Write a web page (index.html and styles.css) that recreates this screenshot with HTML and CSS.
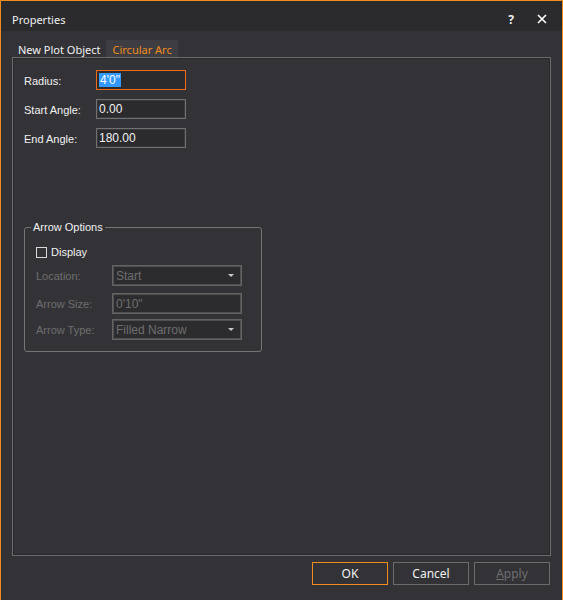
FILE: index.html
```
<!DOCTYPE html>
<html>
<head>
<meta charset="utf-8">
<link rel="stylesheet" href="styles.css">
</head>
<body>
<div class="window">
  <div class="titlebar">
    <span class="title">Properties</span>
    <span class="help">?</span>
    <span class="close"><svg width="10" height="10" viewBox="0 0 10 10"><path d="M1 1 L9 9 M9 1 L1 9" stroke="#ffffff" stroke-width="1.6"/></svg></span>
  </div>
  <div class="tabs">
    <div class="tab">New Plot Object</div>
    <div class="tab active">Circular Arc</div>
  </div>
  <div class="panel">
    <div class="fields">
      <div class="row"><label>Radius:</label><div class="input focused"><span class="sel">4'0"</span></div></div>
      <div class="row"><label>Start Angle:</label><div class="input">0.00</div></div>
      <div class="row"><label>End Angle:</label><div class="input">180.00</div></div>
    </div>
    <fieldset class="group">
      <legend>Arrow Options</legend>
      <div class="check"><span class="box"></span><span>Display</span></div>
      <div class="grow"><label>Location:</label><div class="combo">Start<span class="arrow"></span></div></div>
      <div class="grow"><label>Arrow Size:</label><div class="combo">0'10"</div></div>
      <div class="grow last"><label>Arrow Type:</label><div class="combo">Filled Narrow<span class="arrow"></span></div></div>
    </fieldset>
  </div>
  <div class="buttons">
    <div class="btn default">OK</div>
    <div class="btn">Cancel</div>
    <div class="btn disabled"><u>A</u>pply</div>
  </div>
</div>
</body>
</html>
```
FILE: styles.css
```
html, body { margin: 0; padding: 0; background: #333337; }
.window {
  width: 563px; height: 600px; box-sizing: border-box;
  border: 1px solid #f08c1e; border-bottom: none;
  background: #333337;
  display: flex; flex-direction: column;
  font-family: "Liberation Sans", Arial, sans-serif; font-size: 11px; color: #f1f1f1;
}
.titlebar {
  height: 30px; box-sizing: border-box; background: #2b2b2d; display: flex; align-items: center;
  padding: 6px 0 0 11px; flex-shrink: 0;
}
.title { font-family: "Noto Sans", "Open Sans", sans-serif; font-size: 11px; color: #f1f1f1; flex: 1; }
.help { font-family: "Noto Sans", sans-serif; font-weight: bold; font-size: 12px; color: #f1f1f1; margin-right: 23px; }
.close { width: 10px; height: 10px; margin-right: 15px; display: flex; }
.tabs { display: flex; margin-top: 9px; padding-left: 11px; height: 17px; }
.tab {
  font-family: "Noto Sans", "Open Sans", sans-serif; font-size: 11px;
  height: 17px; line-height: 19px; padding: 0 6px; color: #f1f1f1;
}
.tab.active { background: #3e3e42; color: #f08c1e; }
.panel {
  margin: 0 11px; height: 499px; box-sizing: border-box;
  border: 1px solid #6b6b6b; box-shadow: inset 1px 1px 0 #2a2a2c, inset -1px -1px 0 #2a2a2c;
  padding: 12px 11px 0 11px; flex-shrink: 0;
}
.fields { display: flex; flex-direction: column; gap: 9px; }
.row { display: flex; align-items: center; height: 20px; }
.row label { width: 72px; padding-top: 1px; }
.input {
  width: 90px; height: 20px; box-sizing: border-box; border: 1px solid #707070;
  outline: 1px solid #3a3a3e; outline-offset: -2px;
  background: #2b2b2e; padding: 2px 0 0 2px; line-height: 15px; color: #f1f1f1; font-size: 12px;
}
.input.focused { border-color: #f06b16; outline: none; }
.sel { background: #3399ff; color: #ffffff; padding: 0 1px; }
.group {
  margin: 72px 0 0 0; width: 238px; height: 132px; box-sizing: border-box;
  border: 1px solid #747474; border-radius: 3px; padding: 10px 0 0 11px;
}
.group legend { padding: 0 2px; margin-left: -5px; color: #f1f1f1; line-height: 14px; }
.check { display: flex; align-items: center; gap: 4px; height: 12px; margin-top: 2px; }
.box { width: 11px; height: 11px; box-sizing: border-box; border: 1px solid #d8d8d8; }
.grow { display: flex; align-items: center; height: 21px; margin-top: 7px; color: #6e6e6e; }
.grow.last { margin-top: 5px; }
.grow label { width: 76px; }
.combo {
  position: relative; width: 130px; height: 21px; box-sizing: border-box;
  border: 1px solid #636363; outline: 1px solid #505050; outline-offset: -2px;
  background: #2c2c2f; padding: 3px 0 0 3px; line-height: 14px; color: #6e6e6e; font-size: 12px;
}
.arrow {
  position: absolute; right: 7px; top: 8px; width: 0; height: 0;
  border-left: 3px solid transparent; border-right: 3px solid transparent; border-top: 3px solid #c8c8c8;
}
.buttons { display: flex; justify-content: flex-end; gap: 5px; margin-top: 6px; padding-right: 12px; }
.btn {
  width: 76px; height: 23px; box-sizing: border-box; border: 1px solid #6b6b6b;
  display: flex; align-items: center; justify-content: center;
  font-family: "Noto Sans", "Open Sans", sans-serif; font-size: 12px; color: #f1f1f1;
  background: #333337;
}
.btn.default { border-color: #f08c1e; }
.btn.disabled { color: #6e6e6e; }
.btn u { text-decoration: underline; }
```
